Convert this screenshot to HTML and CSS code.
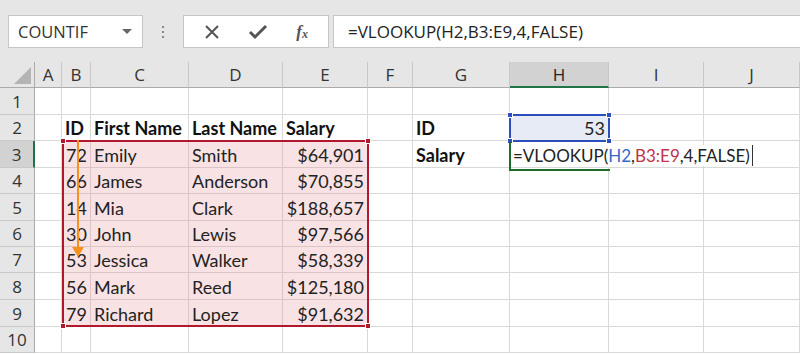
FILE: index.html
```html
<!DOCTYPE html>
<html lang="en">
<head>
  <meta charset="UTF-8">
  <title>VLOOKUP</title>
  <link rel="stylesheet" href="styles.css">
</head>
<body>
  <!-- Formula bar -->
  <div class="toolbar">
    <div class="namebox">
      <span>COUNTIF</span>
      <span class="caret"></span>
    </div>
    <div class="grip"><i></i><i></i><i></i></div>
    <div class="fx-buttons">
      <svg width="16" height="16" viewBox="0 0 16 16"><path d="M2 2 L14 14 M14 2 L2 14" stroke="#555" stroke-width="2" fill="none"/></svg>
      <svg width="20" height="16" viewBox="0 0 20 16"><path d="M2 8 L7 13 L18 2" stroke="#555" stroke-width="3" fill="none"/></svg>
      <span class="fx">f<sub>x</sub></span>
    </div>
    <div class="formula">=VLOOKUP(H2,B3:E9,4,FALSE)</div>
  </div>

  <!-- Sheet -->
  <div class="sheet" id="sheet"></div>

  <script>
    const cols = ["A", "B", "C", "D", "E", "F", "G", "H", "I", "J"];
    const data = {
      2: { B: "ID", C: "First Name", D: "Last Name", E: "Salary", G: "ID", H: "53" },
      3: { B: "72", C: "Emily", D: "Smith", E: "$64,901", G: "Salary" },
      4: { B: "66", C: "James", D: "Anderson", E: "$70,855" },
      5: { B: "14", C: "Mia", D: "Clark", E: "$188,657" },
      6: { B: "30", C: "John", D: "Lewis", E: "$97,566" },
      7: { B: "53", C: "Jessica", D: "Walker", E: "$58,339" },
      8: { B: "56", C: "Mark", D: "Reed", E: "$125,180" },
      9: { B: "79", C: "Richard", D: "Lopez", E: "$91,632" }
    };
    const sheet = document.getElementById("sheet");
    let html = '<div class="corner"><span></span></div>';
    cols.forEach(c => {
      html += `<div class="colhead${c === "H" ? " sel" : ""}">${c}</div>`;
    });
    for (let r = 1; r <= 10; r++) {
      html += `<div class="rowhead${r === 3 ? " sel" : ""}">${r}</div>`;
      cols.forEach(c => {
        let cls = "cell";
        const v = (data[r] && data[r][c]) || "";
        if (r === 2 && "BCDEG".includes(c)) cls += " bold";
        if (r === 3 && c === "G") cls += " bold";
        if (r >= 3 && r <= 9 && "BCDE".includes(c)) cls += " range";
        if ((c === "B" && r >= 3) || c === "E" && r >= 3 || c === "H") cls += " num";
        if (r === 2 && c === "H") cls += " lookup";
        if (r === 3 && c === "H") {
          html += `<div class="cell edit"><span class="edit-text">=VLOOKUP(<b class="ref-blue">H2</b>,<b class="ref-red">B3:E9</b>,4,FALSE)<i class="cursor"></i></span></div>`;
          return;
        }
        html += `<div class="${cls}">${v}</div>`;
      });
    }
    html += '<div class="range-box"><i class="h tl"></i><i class="h tr"></i><i class="h bl"></i><i class="h br"></i></div>';
    html += '<div class="lookup-box"><i class="h tl"></i><i class="h tr"></i><i class="h bl"></i><i class="h br"></i></div>';
    html += '<div class="arrow"></div>';
    sheet.innerHTML = html;
  </script>
</body>
</html>
```

FILE: styles.css
```css
* {
  margin: 0;
  padding: 0;
  box-sizing: border-box;
}

body {
  width: 800px;
  height: 354px;
  overflow: hidden;
  background: #fff;
  font-family: 'Open Sans', sans-serif;
  color: #222;
}

/* Formula bar */
.toolbar {
  height: 62px;
  background: #e6e6e6;
  display: flex;
  align-items: flex-start;
  padding: 15px 0 0 8px;
}

.namebox {
  width: 135px;
  height: 33px;
  background: #fff;
  border: 1px solid #c6c6c6;
  display: flex;
  align-items: center;
  justify-content: space-between;
  padding: 0 10px 0 9px;
  font-size: 16.5px;
  color: #333;
}

.caret {
  width: 0;
  height: 0;
  border-left: 5px solid transparent;
  border-right: 5px solid transparent;
  border-top: 5px solid #666;
}

.grip {
  width: 40px;
  height: 33px;
  display: flex;
  flex-direction: column;
  align-items: center;
  justify-content: center;
  gap: 3px;
}

.grip i {
  width: 2px;
  height: 2px;
  background: #8a8a8a;
}

.fx-buttons {
  width: 146px;
  height: 33px;
  background: #fff;
  border: 1px solid #c6c6c6;
  display: flex;
  align-items: center;
  justify-content: space-around;
  padding: 0 6px;
}

.fx {
  font-family: 'Liberation Serif', serif;
  font-style: italic;
  font-weight: bold;
  font-size: 17px;
  color: #555;
}

.fx sub {
  font-size: 12px;
  vertical-align: -1px;
}

.formula {
  flex: 1;
  margin-left: 4px;
  height: 33px;
  background: #fff;
  border: 1px solid #c6c6c6;
  border-right: none;
  display: flex;
  align-items: center;
  padding-left: 14px;
  font-size: 17px;
  color: #222;
}

/* Sheet grid */
.sheet {
  position: relative;
  display: grid;
  grid-template-columns: 35px 27px 29px 98px 94px 85px 45px 97px 99px 95px 96px;
  grid-template-rows: 26px 27px 26px 27px 26px 27px 26px 26px 27px 27px 26px;
  font-family: 'Lato', sans-serif;
  font-size: 18px;
}

.corner {
  background: #e6e6e6;
  border-right: 1px solid #ababab;
  border-bottom: 1px solid #ababab;
  position: relative;
}

.corner span {
  position: absolute;
  right: 3px;
  bottom: 3px;
  width: 0;
  height: 0;
  border-left: 17px solid transparent;
  border-bottom: 17px solid #b4b4b4;
}

.colhead {
  background: #e6e6e6;
  border-right: 1px solid #c8c8c8;
  border-bottom: 1px solid #ababab;
  display: flex;
  align-items: flex-end;
  justify-content: center;
  padding-bottom: 1px;
  font-family: 'Open Sans', sans-serif;
  font-size: 17px;
  color: #333;
}

.colhead.sel {
  background: #d2d2d2;
  border-bottom: 2px solid #217346;
  padding-bottom: 0;
  color: #222;
}

.rowhead {
  background: #e6e6e6;
  border-right: 1px solid #ababab;
  border-bottom: 1px solid #c8c8c8;
  display: flex;
  align-items: center;
  justify-content: center;
  font-family: 'Open Sans', sans-serif;
  font-size: 17px;
  color: #333;
}

.rowhead.sel {
  background: #d2d2d2;
  border-right: 2px solid #217346;
}

.cell {
  border-right: 1px solid #d9d9d9;
  border-bottom: 1px solid #d9d9d9;
  display: flex;
  align-items: flex-end;
  padding: 0 3px 1px 3px;
  white-space: nowrap;
  color: #222;
}

.cell.bold {
  font-weight: bold;
  color: #111;
}

.cell.num {
  justify-content: flex-end;
}

.cell.range {
  background: #f8e2e4;
  border-color: #dcc4c7;
}

.cell.lookup {
  background: #e7ebf6;
}

.cell.edit {
  position: relative;
  z-index: 1;
  border-right: none;
  font-size: 17px;
}

.edit-text {
  background: #fff;
  padding-right: 2px;
  display: flex;
  align-items: flex-end;
}

.edit-text b {
  font-weight: normal;
}

.ref-blue {
  color: #3a66c4;
}

.ref-red {
  color: #c0334a;
}

.cursor {
  display: inline-block;
  width: 1px;
  height: 21px;
  background: #333;
  margin-left: 2px;
}

/* Range highlights */
.range-box {
  position: absolute;
  left: 62px;
  top: 78px;
  width: 307px;
  height: 187px;
  border: 2px solid #b3172c;
}

.lookup-box {
  position: absolute;
  left: 509px;
  top: 52px;
  width: 101px;
  height: 28px;
  border: 2px solid #2c4fbd;
  z-index: 2;
}

.lookup-box::after {
  content: "";
  position: absolute;
  left: -2px;
  right: -2px;
  top: 26px;
  height: 27px;
  border-left: 2px solid #1e6b2a;
  border-bottom: 2px solid #1e6b2a;
}

.h {
  position: absolute;
  width: 6px;
  height: 6px;
  border: 1px solid #fff;
}

.range-box .h {
  background: #b3172c;
}

.lookup-box .h {
  background: #2c4fbd;
}

.h.tl { left: -4px; top: -4px; }
.h.tr { right: -4px; top: -4px; }
.h.bl { left: -4px; bottom: -4px; }
.h.br { right: -4px; bottom: -4px; }

.arrow {
  position: absolute;
  left: 77px;
  top: 78px;
  width: 2px;
  height: 108px;
  background: #f5921e;
}

.arrow::after {
  content: "";
  position: absolute;
  left: -5px;
  bottom: -9px;
  border-left: 6px solid transparent;
  border-right: 6px solid transparent;
  border-top: 10px solid #f5921e;
}
```
